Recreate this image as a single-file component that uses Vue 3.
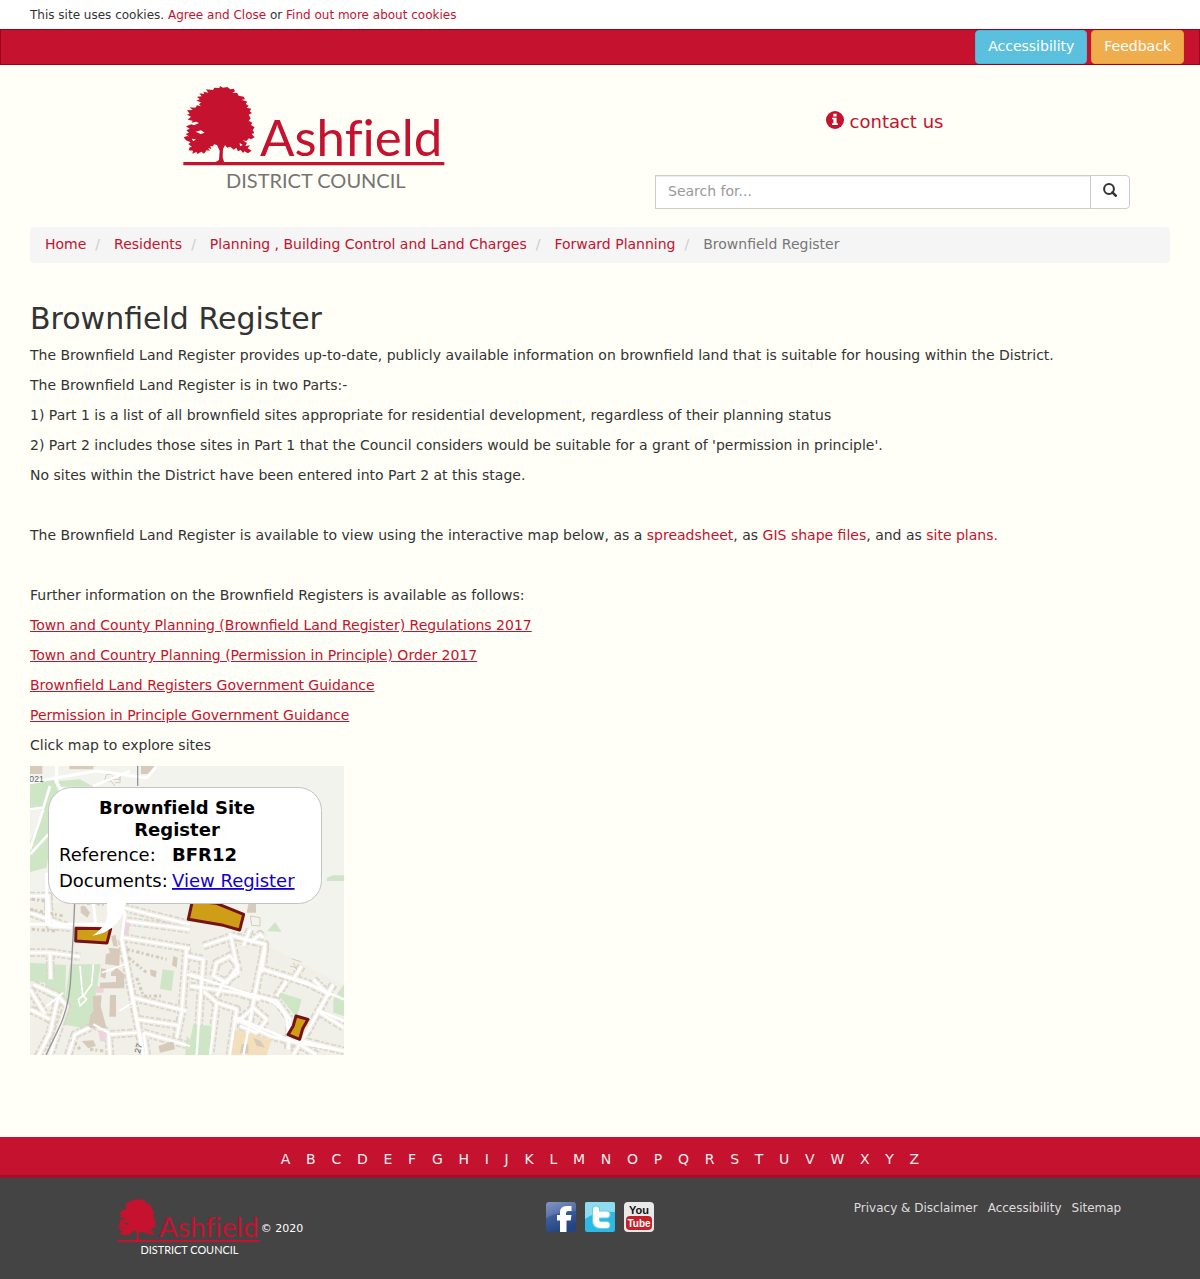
<script setup>
const crumbs = ['Home', 'Residents', 'Planning , Building Control and Land Charges', 'Forward Planning']
const letters = 'ABCDEFGHIJKLMNOPQRSTUVWXYZ'.split('')
const guidance = [
  'Town and County Planning (Brownfield Land Register) Regulations 2017',
  'Town and Country Planning (Permission in Principle) Order 2017',
  'Brownfield Land Registers Government Guidance',
  'Permission in Principle Government Guidance'
]

// Residential streets, in thirds of a map pixel
const streets = [
  'M0 560H60L62 640M62 560L150 572',
  'M10 655L85 690L60 800L20 880M0 670L45 745M85 690L110 720L60 867M0 730L60 760',
  'M0 390H55V480M0 440L110 480M55 390L60 480L125 485',
  'M280 425L480 475M290 465L480 490M280 515L480 548',
  'M275 520L340 867M310 695L470 735M325 760L445 778M340 800L480 840M340 800L350 867',
  'M470 545L455 740L440 815M480 660L620 680L690 700',
  'M471 570L520 580L510 715L500 867M515 635L480 625',
  'M520 540L610 510L705 535L675 685L640 867M600 500L625 620L580 650L560 690',
  'M560 590L600 570L625 600L590 650L550 630ZM520 675L560 710L540 867M560 710L620 730L600 867',
  'M700 610L830 650L890 680M705 545L695 620M740 690L770 645',
  'M675 690L740 705L780 760L775 850',
  'M620 770L670 725L710 760L680 800L630 780M610 755L720 810L800 830L860 867',
  'M910 655L830 800L790 867M870 740L942 785M800 820L942 855',
  'M660 490L640 540M660 530L690 505L700 515M850 640L900 690M815 600L790 640',
  'M115 867L135 805L180 785M190 775L235 800L240 867M240 805L320 800'
]
</script>

<template>
  <div class="page">
    <svg class="sprite" aria-hidden="true">
      <symbol id="tree" viewBox="38 30 786 318">
        <path fill="#c4122f" fill-rule="evenodd" d="M149 33L158 38L171 36L180 43L190 41L194 49L186 54L200 53L205 62L220 65L224 73L214 74L231 80L226 87L235 92L229 98L243 101L238 109L245 114L235 119L241 130L235 137L246 143L242 150L253 157L247 165L252 174L244 177L253 187L242 193L236 190L228 198L217 196L230 204L225 213L239 211L232 220L244 227L233 235L222 229L218 234L211 225L203 229L198 218L190 224L180 215L171 218L164 211L158 222L157 247L162 263H132L146 255L148 227L140 210L131 208L128 214L120 213L123 222L113 219L119 227L109 226L101 236L93 230L81 237L78 231L66 236L68 227L55 226L58 217L65 216L54 207L61 202L47 196L40 187L51 183L57 185L46 177L56 173L48 166L58 161L47 154L63 148L71 151L86 144L77 140L64 143L67 137L52 134L62 125L50 119L58 116L50 106L67 105L58 97L75 98L80 91L92 94L86 88L92 82L78 77L88 73L80 65L94 64L87 55L102 57L99 50L114 53L107 43L128 45L132 38L147 39ZM76 170L92 166L103 173L91 177ZM208 204L217 210L209 214ZM64 191L77 193L69 199Z" />
        <path fill="#c4122f" d="M39 261H822V271H39Z" />
      </symbol>
    </svg>

    <div class="cookies">
      This site uses cookies. <a href="#">Agree and Close</a> or <a href="#">Find out more about cookies</a>
    </div>

    <nav class="topbar" aria-label="Tools">
      <button type="button" class="btn info">Accessibility</button>
      <button type="button" class="btn warning">Feedback</button>
    </nav>

    <header class="header">
      <a href="#" class="logo" aria-label="Ashfield District Council">
        <svg width="262" height="106" viewBox="0 0 262 106">
          <use href="#tree" width="262" height="106" />
          <text x="77" y="71" font-size="51" fill="#c4122f">Ashfield</text>
          <text x="43" y="103" font-size="20" fill="#737573">DISTRICT COUNCIL</text>
        </svg>
      </a>
      <div class="tools">
        <a href="#" class="contact">
          <svg width="18" height="18" viewBox="0 0 18 18" aria-hidden="true">
            <circle cx="9" cy="9" r="9" fill="#c4122f" />
            <path fill="#fffff7" d="M7.3 2.8h3.3v2.6H7.3zM6 6.7h4.6v5.6h1.3v1.6H6v-1.6h1.4V8.3H6z" />
          </svg>
          contact us
        </a>
        <form class="search" role="search" @submit.prevent>
          <input type="text" placeholder="Search for..." aria-label="Search for">
          <button type="submit" aria-label="Search">
            <svg width="14" height="14" viewBox="0 0 14 14" aria-hidden="true">
              <circle cx="6" cy="6" r="4.9" fill="none" stroke="#333" stroke-width="2" />
              <path d="M9.4 9.4l3.3 3.3" stroke="#333" stroke-width="2.6" stroke-linecap="round" />
            </svg>
          </button>
        </form>
      </div>
    </header>

    <main class="content">
      <ol class="breadcrumb">
        <li v-for="crumb in crumbs" :key="crumb"><a href="#">{{ crumb }}</a></li>
        <li class="active">Brownfield Register</li>
      </ol>

      <h1>Brownfield Register</h1>
      <p>The Brownfield Land Register provides up-to-date, publicly available information on brownfield land that is suitable for housing within the District.</p>
      <p>The Brownfield Land Register is in two Parts:-</p>
      <p>1) Part 1 is a list of all brownfield sites appropriate for residential development, regardless of their planning status</p>
      <p>2) Part 2 includes those sites in Part 1 that the Council considers would be suitable for a grant of 'permission in principle'.</p>
      <p>No sites within the District have been entered into Part 2 at this stage.</p>
      <p class="spaced">The Brownfield Land Register is available to view using the interactive map below, as a <a href="#">spreadsheet</a>, as <a href="#">GIS shape files</a>, and as <a href="#">site plans.</a></p>
      <p class="spaced">Further information on the Brownfield Registers is available as follows:</p>
      <p v-for="item in guidance" :key="item"><a href="#" class="underlined">{{ item }}</a></p>
      <p>Click map to explore sites</p>

      <a href="#" class="map">
        <svg width="314" height="289" viewBox="0 0 314 289" role="img" aria-label="Map of brownfield sites">
          <rect width="314" height="289" fill="#f2f3ed" />
          <g transform="scale(.33333)">
            <path fill="#f0efe8" d="M0 410H480L700 530L942 660V867H0Z" />
            <g fill="#cfe6c6">
              <path d="M0 50L70 38L85 75L60 130L55 270L50 305L0 318V230L40 130L0 135Z" />
              <path d="M85 45L150 40L190 62H90ZM0 590L108 597L105 715L50 690L45 650L0 645Z" />
              <path d="M120 595H212L195 700L180 790L95 775Z" />
              <path d="M398 610L432 615L425 675L390 668ZM712 495L735 468L755 498ZM890 335L910 328H942V345H890Z" />
            </g>
            <g fill="none" stroke-linejoin="round">
              <path v-for="(d, i) in streets" :key="'h' + i" :d="d" stroke="#dad4c9" stroke-width="26" stroke-dasharray="16 5 9 4 12 6" />
              <path v-for="(d, i) in streets" :key="'c' + i" :d="d" stroke="#f0efe8" stroke-width="16" />
            </g>
            <path fill="#cfe6c6" d="M910 700L942 655V750L910 740ZM735 675L815 700L800 755ZM490 775L545 780L540 867H471ZM470 810L480 820V867H465Z" />
            <path fill="#f4dfbd" d="M610 790L725 820L710 867H600Z" />
            <g fill="#edd4dc"><path d="M276 465L300 470L295 510L274 505ZM205 795L232 793L228 828L210 825ZM200 660L222 662L220 680L198 680Z" /></g>
            <g fill="#d7cabb">
              <path d="M0 0H37V24H0ZM118 0H190V10H118ZM333 0H380L362 24H333ZM152 420L165 420L180 440L172 455L152 440Z" />
              <path d="M235 545L270 548L268 600L225 594L228 565L240 560ZM243 510L257 507L263 542L250 540ZM243 620L260 605L283 625V667H210V650L258 648V630H243ZM213 607L230 610L226 638L212 632Z" />
              <path d="M240 687H258V752H238ZM188 690L215 688L212 720L230 787L175 785L180 750L190 735ZM430 570L443 575L440 605L426 598ZM360 610L380 615L377 635L362 628ZM155 825L190 823L198 840L175 847ZM385 840L430 825L435 850L390 860ZM635 835H655V862H630ZM670 815L692 825L705 845L680 840Z" />
              <path d="M657 405H678V440H650Z" />
            </g>
            <g fill="none" stroke="#d7cabb" stroke-width="3">
              <path d="M222 48L230 25H270V40H248V30M235 35L255 60M222 45H242M270 30V50H255M661 450L690 455V480L665 478ZM785 578L815 588M780 600L800 606M790 590L800 612" />
              <path stroke-width="9" stroke-dasharray="10 6 6 8" d="M5 400L45 405M0 430L100 450M5 490L80 495M290 550L410 580M295 575L350 620M320 635L340 690L400 690M125 820L150 850M180 850L220 855M140 410L225 415" />
            </g>
            <g fill="none" stroke-linejoin="round" stroke="#fff">
              <path v-for="(d, i) in streets" :key="'r' + i" :d="d" stroke-width="7" />
              <path stroke-width="9" d="M0 50L80 35L200 15L350 35L380 0M80 0V50L100 80M0 475H235M245 410L285 440L275 520L340 867M190 410L197 475M50 320V475" />
              <path stroke-width="8" d="M300 15L190 60M0 130L40 125L60 60M40 130L0 250M55 205L0 265M471 625L680 690Q750 705 770 760L775 810M620 755L800 830L942 855M860 730L942 765M700 610L850 660L942 700" />
              <path stroke-width="5" d="M150 600L158 690L145 700L150 720L170 700L160 690L185 655L190 595M215 620L285 595M268 735L315 705M50 720L100 680" />
            </g>
            <path fill="none" stroke="#949598" stroke-width="4" d="M134 410L130 500L123 620Q120 720 85 790L48 867M323 0V60" />
            <g stroke="#761312" stroke-width="9" stroke-linejoin="round" fill="#cf9e16">
              <path d="M138 487L242 488L231 531L137 525Z" />
              <path d="M487 405L560 412L641 445L629 492L580 478L475 460Z" />
              <path d="M798 750L834 760L818 788L809 820L774 806L790 779Z" />
            </g>
            <g class="map-mark" fill="#64665f" font-size="26">
              <text x="-2" y="49">021</text>
              <text x="330" y="863" transform="rotate(-75 330 863)">27</text>
            </g>
            <path fill="#fff" d="M230 405Q234 445 228 465Q216 491 187 509Q232 503 262 470Q283 445 288 405Z" />
          </g>
          <rect x="18.500" y="21.500" width="273" height="116" rx="23" fill="#fff" stroke="#c3c3c3" />
          <path fill="#fff" d="M77 136h19v3h-19z" />
          <g class="popup">
            <text x="147" y="48" text-anchor="middle" class="strong">Brownfield Site</text>
            <text x="147" y="70" text-anchor="middle" class="strong">Register</text>
            <text x="29" y="95">Reference:</text>
            <text x="142" y="95" class="strong">BFR12</text>
            <text x="29" y="121">Documents:</text>
            <text x="142" y="121" class="popup-link">View Register</text>
          </g>
        </svg>
      </a>
    </main>

    <nav class="a-z" aria-label="A to Z">
      <ul>
        <li v-for="letter in letters" :key="letter"><a href="#">{{ letter }}</a>{{ ' ' }}</li>
      </ul>
    </nav>

    <footer class="footer">
      <div class="brand">
        <svg class="logo-small" width="143" height="58" viewBox="0 0 262 106" role="img" aria-label="Ashfield District Council">
          <use href="#tree" width="262" height="106" />
          <text x="77" y="71" font-size="51" fill="#c4122f">Ashfield</text>
          <text x="43" y="103" font-size="20" fill="#fff">DISTRICT COUNCIL</text>
        </svg>
        <span>© 2020</span>
      </div>
      <div class="social">
        <a href="#" aria-label="Facebook">
          <svg width="30" height="30" viewBox="0 0 30 30">
            <defs>
              <linearGradient id="fb" x2=".4" y2="1"><stop stop-color="#7189ba" /><stop offset=".5" stop-color="#3e5c9c" /><stop offset="1" stop-color="#24447f" /></linearGradient>
            </defs>
            <rect width="30" height="30" rx="3" fill="url(#fb)" />
            <path fill="#fff" fill-opacity=".12" d="M0 3Q0 0 3 0H27Q30 0 30 3V9Q12 9 0 16Z" />
            <path fill="#fff" d="M14 30V18.500H11V13h3v-2.500Q14 4 20.500 4h5v5h-3Q20 9 20 11v2h5.500l-.8 5.500H20.500V30Z" />
          </svg>
        </a>
        <a href="#" aria-label="Twitter">
          <svg width="30" height="30" viewBox="0 0 30 30">
            <rect width="30" height="30" rx="2" fill="#2cb9e4" />
            <path fill="#8edcf0" d="M0 2Q0 0 2 0H28Q30 0 30 2V10Q12 8 0 17Z" />
            <path fill="none" stroke="#6bcdea" stroke-width="8" stroke-linecap="round" stroke-linejoin="round" d="M11 7.500V18Q11 23 16 23H21.500M11 12.500H21.500" />
            <path fill="none" stroke="#fff" stroke-width="6" stroke-linecap="round" stroke-linejoin="round" d="M11 7.500V18Q11 23 16 23H21.500M11 12.500H21.500" />
          </svg>
        </a>
        <a href="#" aria-label="YouTube">
          <svg width="30" height="30" viewBox="0 0 30 30" class="youtube">
            <rect width="30" height="30" rx="4" fill="#e9e9e9" />
            <rect x="2" y="14" width="26" height="14" rx="4" fill="#c62026" />
            <text x="15" y="12" text-anchor="middle" font-size="11" fill="#111">You</text>
            <text x="15" y="25" text-anchor="middle" font-size="10" fill="#fff">Tube</text>
          </svg>
        </a>
      </div>
      <div class="legal">
        <a href="#">Privacy &amp; Disclaimer</a>
        <a href="#">Accessibility</a>
        <a href="#">Sitemap</a>
      </div>
    </footer>
  </div>
</template>

<style>
body {
  margin: 0;
  background: #444;
}
</style>

<style scoped>
.page {
  background: #fffff7;
  color: #333;
  font: 14px/20px "DejaVu Sans", Verdana, sans-serif;
}
.page *,
.page *::before {
  box-sizing: border-box;
}
.page svg {
  display: block;
}
.page .sprite {
  position: absolute;
  width: 0;
  height: 0;
}
a {
  color: #c4122f;
  text-decoration: none;
}
.cookies {
  padding: 5px 30px 4px;
  background: #fff;
  font-size: 12px;
}
.topbar {
  display: flex;
  justify-content: flex-end;
  gap: 4px;
  padding: 0 15px;
  background: #c4122f;
  border: 1px solid #99001a;
}
.btn {
  padding: 5px 12px 7px;
  border: 1px solid;
  border-radius: 4px;
  color: #fff;
  font: inherit;
}
.info {
  background: #5bc0de;
  border-color: #46b8da;
}
.warning {
  background: #f0ad4e;
  border-color: #eea236;
}
.header {
  display: grid;
  grid-template-columns: 1fr 1fr;
  align-items: start;
  padding: 20px 15px 18px;
}
.logo {
  justify-self: center;
  margin-left: 12px;
}
.logo,
.logo-small {
  font-family: Lato, sans-serif;
  font-variant-ligatures: none;
}
.tools {
  display: flex;
  flex-direction: column;
  gap: 40px;
  padding: 24px 55px 0;
}
.contact {
  display: flex;
  align-items: center;
  align-self: center;
  gap: 6px;
  margin-right: 16px;
  font-size: 18px;
  line-height: 26px;
}
.contact svg {
  margin-bottom: 4px;
}
.search {
  display: flex;
}
.search input {
  flex: 1;
  min-width: 0;
  height: 34px;
  padding: 5px 12px 7px;
  background: #fff;
  border: 1px solid #ccc;
  border-radius: 0;
  box-shadow: inset 0 1px 1px rgba(0, 0, 0, .075);
  color: #555;
  font: inherit;
}
.search input::placeholder {
  color: #999;
}
.search button {
  width: 40px;
  margin-left: -1px;
  padding: 0 12px 4px;
  background: #fff;
  border: 1px solid #ccc;
  border-radius: 0 4px 4px 0;
}
.content {
  padding: 0 30px 82px;
}
.breadcrumb {
  display: flex;
  flex-wrap: wrap;
  margin: 0 0 37px;
  padding: 7px 15px 9px;
  background: #f5f5f5;
  border-radius: 4px;
  list-style: none;
}
.breadcrumb li + li::before {
  padding: 0 14px 0 9px;
  color: #ccc;
  content: "/";
}
.breadcrumb .active {
  color: #777;
}
h1 {
  margin: 0 0 7px;
  font-size: 30px;
  font-weight: 400;
  line-height: 38px;
}
p {
  margin: 0 0 10px;
}
.spaced {
  margin-top: 40px;
}
.underlined {
  text-decoration: underline;
}
.map {
  display: inline-block;
  margin-top: 1px;
  vertical-align: top;
}
.map-mark {
  font-family: "Liberation Sans", Arial, sans-serif;
}
.popup {
  font-family: "DejaVu Sans", Verdana, sans-serif;
  font-size: 18px;
  font-variant-ligatures: none;
  fill: #000;
}
.strong {
  font-weight: 700;
}
.popup .popup-link {
  fill: #10c;
  text-decoration: underline;
}
.a-z {
  padding: 11px 15px 6px;
  background: #c4122f;
  border-bottom: 3px solid #a0122a;
  text-align: center;
}
.a-z ul {
  margin: 0;
  padding: 0;
  font-size: 18px;
  list-style: none;
}
.a-z li {
  display: inline;
}
.a-z a {
  padding: 0 5px;
  color: #eee;
  font-size: 14px;
}
.footer {
  display: grid;
  grid-template-columns: repeat(3, 1fr);
  justify-items: center;
  align-items: start;
  padding: 20px 15px 23px;
  background: #444;
  color: #fff;
}
.brand {
  display: flex;
  align-items: center;
  gap: 1px;
  font-size: 11px;
}
.brand span {
  padding-top: 4px;
}
.social {
  display: flex;
  gap: 9px;
  padding-top: 4px;
}
.youtube {
  font-family: "Liberation Sans", Arial, sans-serif;
  font-weight: 700;
}
.legal {
  display: flex;
  gap: 10px;
  margin-right: 5px;
  font-size: 12px;
}
.legal a {
  color: #ddd;
}
</style>
